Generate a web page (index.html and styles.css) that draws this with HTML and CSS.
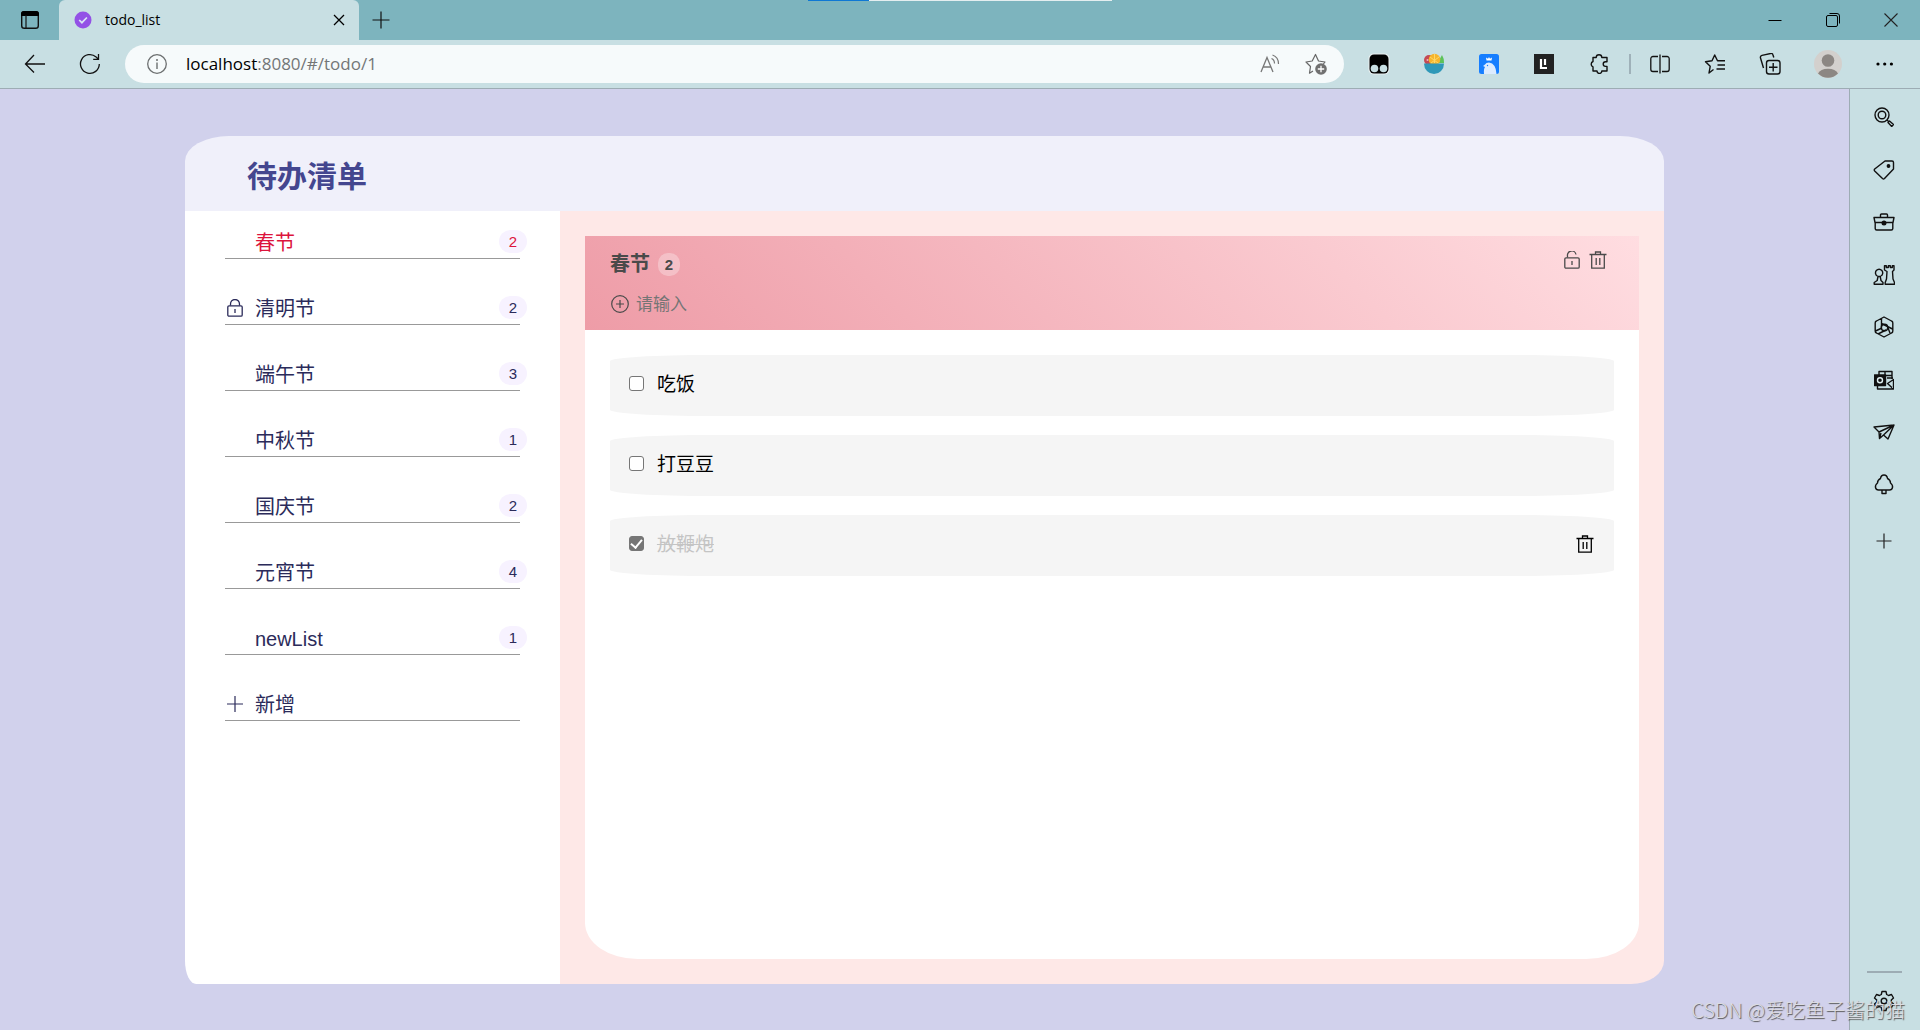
FILE: index.html
```html
<!DOCTYPE html>
<html lang="zh-CN">
<head>
<meta charset="utf-8">
<meta name="viewport" content="width=device-width, initial-scale=1">
<title>todo_list</title>
<link rel="stylesheet" href="styles.css">
</head>
<body>
<header class="browser">
  <div class="load-strip"></div>
  <div class="tabstrip">
    <button class="workspaces" aria-label="Tab actions">
      <svg width="20" height="20" viewBox="0 0 20 20"><rect x="1.7" y="1.7" width="16.6" height="16.6" rx="2.6" fill="none" stroke="#111" stroke-width="1.4"/><path d="M1 6V4a3 3 0 0 1 3-3h12a3 3 0 0 1 3 3v2z" fill="#000"/><path d="M6 5v13" stroke="#111" stroke-width="1.2"/></svg>
    </button>
    <div class="tab">
      <svg width="18" height="18" viewBox="0 0 18 18"><circle cx="9" cy="9" r="8.5" fill="#9351e6"/><path d="M5.2 9l2.7 2.7 5-5.2" fill="none" stroke="#d9e6f5" stroke-width="1.7"/></svg>
      <span class="tab-title">todo_list</span>
      <button class="tab-close" aria-label="Close tab"><svg width="12" height="12" viewBox="0 0 12 12"><path d="M1 1l10 10M11 1L1 11" stroke="#000" stroke-width="1.3"/></svg></button>
    </div>
    <button class="newtab" aria-label="New tab"><svg width="18" height="18" viewBox="0 0 18 18"><path d="M9 .5v17M.5 9h17" stroke="#111" stroke-width="1.2"/></svg></button>
    <div class="window-controls">
      <button aria-label="Minimize"><svg width="14" height="14" viewBox="0 0 14 14"><path d="M.5 7.5h13" stroke="#000"/></svg></button>
      <button aria-label="Restore"><svg width="14" height="14" viewBox="0 0 14 14"><rect x=".5" y="2.5" width="11" height="11" rx="1.5" fill="none" stroke="#000"/><path d="M3.5.5h7.5a2.500 2.500 0 0 1 2.500 2.500v7.500" fill="none" stroke="#000"/></svg></button>
      <button aria-label="Close window"><svg width="14" height="14" viewBox="0 0 14 14"><path d="M.5.5l13 13M13.500.5l-13 13" stroke="#222" stroke-width="1.100"/></svg></button>
    </div>
  </div>
  <div class="toolbar">
    <button class="tool-back" aria-label="Back"><svg width="22" height="20" viewBox="0 0 22 20"><path d="M10 1L1.500 10l8.500 8.500M1.500 10H21" fill="none" stroke="#111" stroke-width="1.300"/></svg></button>
    <button class="tool-reload" aria-label="Reload"><svg width="22" height="22" viewBox="0 0 22 22"><path d="M20.300 11a9.400 9.400 0 1 1-3.200-7.100l2.200 2.300M19.500 1v5.300h-5.300" fill="none" stroke="#111" stroke-width="1.300"/></svg></button>
    <div class="omnibox">
      <svg width="20" height="20" viewBox="0 0 20 20"><circle cx="10" cy="10" r="9.300" fill="none" stroke="#6c6f70" stroke-width="1.300"/><path d="M10 8.500V15" stroke="#6c6f70" stroke-width="1.400"/><circle cx="10" cy="6" r="1" fill="#6c6f70"/></svg>
      <a class="url" href="#/todo/1">localhost<span class="url-rest">:8080/#/todo/1</span></a>
      <button aria-label="Read aloud"><svg width="20" height="20" viewBox="0 0 20 20"><path d="M1 18L7 3.500 13 18M3 13h8" fill="none" stroke="#777" stroke-width="1.300"/><path d="M11.500 4.500q3 1.200 3 5M12.500 1q6 2 6 9" fill="none" stroke="#777" stroke-width="1.200"/></svg></button>
      <button aria-label="Add to favourites"><svg width="22" height="22" viewBox="0 0 22 22"><path d="M8 18l-3.500 2.200 1-6.700L1 9l6.200-1L10.500 1.500 13.500 8l6.500 1-2 2.500" fill="none" stroke="#666" stroke-width="1.200" stroke-linejoin="round"/><circle cx="16" cy="16" r="5.800" fill="#707070"/><path d="M16 12.800v6.400M12.800 16h6.400" stroke="#fff" stroke-width="1.300"/></svg></button>
    </div>
    <div class="extensions">
      <button aria-label="Script manager"><svg width="22" height="22" viewBox="0 0 22 22"><rect x=".5" y=".5" width="21" height="21" rx="5" fill="#e9eff0"/><rect x="1.500" y="1.500" width="19" height="19" rx="4.500" fill="#000"/><circle cx="6.500" cy="15.500" r="3.800" fill="#c8dfe3"/><circle cx="15.500" cy="15.500" r="3.800" fill="#c8dfe3"/></svg></button>
      <button aria-label="Salad"><svg width="22" height="22" viewBox="0 0 22 22"><circle cx="6" cy="7" r="5" fill="#c44a55"/><path d="M15 9l4-7q2 3 2 8h-6z" fill="#5cc35a"/><circle cx="11.500" cy="6.500" r="5.800" fill="#f6b52c"/><path d="M11.500 1v9M7 4l8 6M16 4l-8 6" stroke="#ffd766"/><path d="M1 10.500h20a10 10.500 0 0 1-20 0z" fill="#2f98b8"/><circle cx="4.500" cy="7" r="1" fill="#eeb5bb"/></svg></button>
      <button aria-label="Penguin"><svg width="20" height="20" viewBox="0 0 20 20"><rect width="20" height="20" rx="2.500" fill="#167eff"/><path d="M5 20q-.5-5 1-7l-2-1 2-1.500Q7 8.500 10 8.500q7 1 7.500 11.500z" fill="#dcebff"/><path d="M7.500 6.500L7 3.500l2 1.200L10 3l1 1.700 2-1.200-.5 3z" fill="#fff"/><circle cx="8.500" cy="11.500" r=".7" fill="#167eff"/></svg></button>
      <button aria-label="Library"><svg width="20" height="20" viewBox="0 0 20 20"><rect width="20" height="20" fill="#222"/><path d="M7 5v9h6M11 5v6" fill="none" stroke="#fff" stroke-width="2.200"/></svg></button>
      <button aria-label="Extensions"><svg width="20" height="20" viewBox="0 0 20 20"><path d="M4 3.500h3.200a2.800 2.800 0 0 1 5.600 0H18v4.300h-1.500a2.300 2.300 0 0 0 0 4.600H18v4.600h-5.200a2.400 2.400 0 0 1-4.800 0H4v-4a3 3 0 0 1 0-5.500z" fill="none" stroke="#111" stroke-width="1.400" stroke-linejoin="round"/></svg></button>
    </div>
    <span class="tool-divider"></span>
    <div class="extensions">
      <button aria-label="Split screen"><svg width="20" height="20" viewBox="0 0 20 20"><path d="M8 2.500H3A2.200 2.200 0 0 0 .8 4.700v10.600A2.200 2.200 0 0 0 3 17.500h5M12 2.500h5a2.200 2.200 0 0 1 2.200 2.200v10.600a2.200 2.200 0 0 1-2.200 2.200h-5M10 .5v19" fill="none" stroke="#111" stroke-width="1.300"/></svg></button>
      <button aria-label="Favourites"><svg width="22" height="20" viewBox="0 0 22 20"><path d="M9.500 15.500L5 19l1.200-6.700L1.500 7.700 8 6.800 10.700 1l2.800 5.800h7.500M13.500 11H21M12.500 15H21" fill="none" stroke="#111" stroke-width="1.400" stroke-linejoin="round"/></svg></button>
      <button aria-label="Collections"><svg width="22" height="22" viewBox="0 0 22 22"><path d="M4.500 15L1.500 5a2 2 0 0 1 1.500-2.600l8.500-1.900a2 2 0 0 1 2.500 1.500l.8 2.500" fill="none" stroke="#111" stroke-width="1.400"/><rect x="7.500" y="7.500" width="13.500" height="13.500" rx="2.500" fill="none" stroke="#111" stroke-width="1.400"/><path d="M14.200 10v8.500M10 14.200h8.500" stroke="#111" stroke-width="1.400"/></svg></button>
    </div>
    <button class="tool-profile" aria-label="Profile"><svg width="28" height="28" viewBox="0 0 28 28"><circle cx="14" cy="14" r="14" fill="#d3d0cd"/><circle cx="14" cy="10.500" r="6.300" fill="#8c8783"/><path d="M4 23.500a10.500 7 0 0 1 20 0 14 14 0 0 1-20 0z" fill="#8c8783"/></svg></button>
    <button class="tool-more" aria-label="Settings and more"><svg width="18" height="4" viewBox="0 0 18 4"><circle cx="2" cy="2" r="1.600"/><circle cx="8.700" cy="2" r="1.600"/><circle cx="15.400" cy="2" r="1.600"/></svg></button>
  </div>
</header>

<div class="window-body">
  <div class="stage">
    <section class="panel">
      <header class="panel-head"><h1>待办清单</h1></header>
      <nav class="lists">
        <ul>
          <li><a class="list-link active" href="#/todo/1"><span class="list-icon"></span><span class="list-name">春节</span><span class="count">2</span></a></li>
          <li><a class="list-link" href="#/todo/2"><span class="list-icon"><svg width="16" height="18" viewBox="0 0 16 18"><rect x=".8" y="6.800" width="14.400" height="10.400" rx="1.200" fill="none" stroke="currentColor" stroke-width="1.300"/><path d="M3.500 6.500V5a4.500 4.500 0 0 1 9 0v1.500M8 10v4" fill="none" stroke="currentColor" stroke-width="1.300"/></svg></span><span class="list-name">清明节</span><span class="count">2</span></a></li>
          <li><a class="list-link" href="#/todo/3"><span class="list-icon"></span><span class="list-name">端午节</span><span class="count">3</span></a></li>
          <li><a class="list-link" href="#/todo/4"><span class="list-icon"></span><span class="list-name">中秋节</span><span class="count">1</span></a></li>
          <li><a class="list-link" href="#/todo/5"><span class="list-icon"></span><span class="list-name">国庆节</span><span class="count">2</span></a></li>
          <li><a class="list-link" href="#/todo/6"><span class="list-icon"></span><span class="list-name">元宵节</span><span class="count">4</span></a></li>
          <li><a class="list-link" href="#/todo/7"><span class="list-icon"></span><span class="list-name">newList</span><span class="count">1</span></a></li>
          <li><button class="list-link"><span class="list-icon"><svg width="16" height="16" viewBox="0 0 16 16"><path d="M8 0v16M0 8h16" stroke="currentColor" stroke-width="1.200"/></svg></span><span class="list-name">新增</span></button></li>
        </ul>
      </nav>
      <main class="content">
        <div class="card">
          <div class="card-head">
            <div class="card-title">
              <h2>春节</h2>
              <span class="card-count">2</span>
              <div class="card-actions">
                <button aria-label="锁定"><svg width="16" height="18" viewBox="0 0 16 18"><rect x=".8" y="6.800" width="14.400" height="10.400" rx="1.200" fill="none" stroke="currentColor" stroke-width="1.300"/><path d="M3.500 6.500V5a4.300 4.300 0 0 1 8.500-1.500M8 10v4" fill="none" stroke="currentColor" stroke-width="1.300"/></svg></button>
                <button aria-label="删除清单"><svg width="18" height="18" viewBox="0 0 18 18"><path d="M.5 3.500h17M6.500 3.500v-2.500h5v2.500M2.700 3.500v13.700h12.600V3.500M7.200 7v7M10.800 7v7" fill="none" stroke="currentColor" stroke-width="1.300"/></svg></button>
              </div>
            </div>
            <label class="add-task">
              <svg width="18" height="18" viewBox="0 0 18 18"><circle cx="9" cy="9" r="8.300" fill="none" stroke="currentColor" stroke-width="1.200"/><path d="M9 5v8M5 9h8" stroke="currentColor" stroke-width="1.200"/></svg>
              <input type="text" placeholder="请输入">
            </label>
          </div>
          <ul class="tasks">
            <li class="task"><label><input type="checkbox"><span class="task-name">吃饭</span></label></li>
            <li class="task"><label><input type="checkbox"><span class="task-name">打豆豆</span></label></li>
            <li class="task done"><label><input type="checkbox" checked><span class="task-name">放鞭炮</span></label><button aria-label="删除"><svg width="18" height="18" viewBox="0 0 18 18"><path d="M.5 3.500h17M6.500 3.500v-2.500h5v2.500M2.700 3.500v13.700h12.600V3.500M7.200 7v7M10.800 7v7" fill="none" stroke="currentColor" stroke-width="1.300"/></svg></button></li>
          </ul>
        </div>
      </main>
    </section>
  </div>

  <aside class="edge-bar">
    <div class="edge-apps">
      <button aria-label="Search"><svg width="20" height="20" viewBox="0 0 20 20" class="line"><circle cx="8" cy="8" r="7"/><circle cx="8" cy="8" r="3.800"/><path d="M13 13l1.500 1.500M14 15.500l1.500-1.500 4 3.500-1.800 2z"/></svg></button>
      <button aria-label="Shopping"><svg width="22" height="20" viewBox="0 0 22 20" class="line"><path d="M12 1h7a1.500 1.500 0 0 1 1.500 1.500V9L11.500 18.500a1.500 1.500 0 0 1-2 0L1.700 11a1.500 1.500 0 0 1 0-2z"/><circle cx="15.500" cy="6" r="1.200" fill="#111"/></svg></button>
      <button aria-label="Tools"><svg width="22" height="18" viewBox="0 0 22 18" class="line"><path d="M7.500 4.500V2a1 1 0 0 1 1-1h5a1 1 0 0 1 1 1v2.500M1 4.500h20l-1 5H2zM2.200 9.500v6a1.500 1.500 0 0 0 1.500 1.500h14.600a1.500 1.500 0 0 0 1.500-1.500v-6"/><circle cx="11" cy="10" r="1.800" fill="#111"/></svg></button>
      <button aria-label="Games"><svg width="22" height="20" viewBox="0 0 22 20" class="line"><path d="M1.200 19.200H10v-1.700l-2-2-.8-4H5l-.8 4-3 2zM4.300 11.500H8M4.300 11a3.600 3.600 0 1 1 3.600 0M11.500.8h1.800v1.700h2V.8h2v1.700h2V.8h1.700V5l-1.500 1.500.5 7.500 1.500 3.500v1.700h-9.300v-1.700L13.500 14l.5-7.500L11.500 5z"/></svg></button>
      <button aria-label="Microsoft 365"><svg width="22" height="22" viewBox="0 0 22 22" class="line"><path d="M11 1l7.500 4a2 2 0 0 1 1.300 2v8a2 2 0 0 1-1.300 2L11 21l-7.500-4a2 2 0 0 1-1.300-2V7a2 2 0 0 1 1.300-2zM8.500 2.500v9M2.500 15l6.500-3M5 18l8-4M8.500 7.500L19.500 13M14 9.500L17 17"/><circle cx="11.500" cy="11.500" r="3.200"/></svg></button>
      <button aria-label="Outlook"><svg width="20" height="20" viewBox="0 0 20 20" class="line"><path d="M5 5V1.500h13V9M11 1.500V8M11 5.500h7M3.500 15v4h16V9.500l-6 4 6 5.500M13 8h6"/><rect x=".5" y="5" width="11" height="10.500" fill="#111"/><circle cx="6" cy="10.200" r="2.500" stroke="#dfeef0"/></svg></button>
      <button aria-label="Drop"><svg width="22" height="16" viewBox="0 0 22 16" class="line"><path d="M1 3L21 1l-6 14-4.500-4-4 3.500-.5-6.500zM6 8L21 1 10.500 11M6.500 14.500L8 9"/></svg></button>
      <button aria-label="Tree"><svg width="20" height="21" viewBox="0 0 20 21" class="line"><path d="M10 1q3 0 3.500 3.500 3 1.500 3 4.500 2.500 2 2 4.500-.5 2.500-3 2.500h-11q-2.500 0-3-2.500-.5-2.500 2-4.500 0-3 3-4.500Q7 1 10 1zM8 16.500v3h4v-3"/></svg></button>
    </div>
    <button class="edge-add" aria-label="Customize"><svg width="16" height="16" viewBox="0 0 16 16"><path d="M8 .5v15M.5 8h15" stroke="#222" stroke-width="1.200"/></svg></button>
    <div class="edge-foot">
      <button aria-label="Settings"><svg width="22" height="22" viewBox="0 0 22 22" class="line"><path d="M9 1.500h4l.7 3 1.800 1 3-1 2 3.500-2.200 2v2l2.200 2-2 3.500-3-1-1.800 1-.7 3H9l-.7-3-1.800-1-3 1-2-3.500 2.200-2v-2l-2.200-2 2-3.500 3 1 1.800-1z" stroke-linejoin="round"/><circle cx="11" cy="11" r="2.800"/></svg></button>
    </div>
  </aside>
</div>
<div class="watermark">CSDN @爱吃鱼子酱的猫</div>
</body>
</html>
```

FILE: styles.css
```css
* {
  box-sizing: border-box;
}

body {
  margin: 0;
  min-height: 100vh;
  display: flex;
  flex-direction: column;
  position: relative;
  background: #d1d1ec;
  color: #000;
  font-family: "Liberation Sans", "Noto Sans CJK SC", sans-serif;
}

button {
  display: flex;
  align-items: center;
  justify-content: center;
  margin: 0;
  padding: 0;
  border: 0;
  background: none;
  color: inherit;
  font: inherit;
}

a {
  color: inherit;
  text-decoration: none;
}

ul {
  margin: 0;
  padding: 0;
  list-style: none;
}

h1,
h2 {
  margin: 0;
}

svg {
  display: block;
  flex: none;
}

.line {
  fill: none;
  stroke: #111;
  stroke-width: 1.4;
  stroke-linejoin: round;
}

/* Browser frame */
.browser {
  position: relative;
  background: #c8dfe3;
  border-bottom: 1px solid #9dacb4;
  font-family: "Open Sans", "Noto Sans", sans-serif;
}

.load-strip {
  position: absolute;
  top: 0;
  left: 50%;
  width: 304px;
  height: 1px;
  margin-left: -152px;
  background: linear-gradient(90deg, #0f78d4 61px, #e4eef0 61px);
}

.tabstrip {
  display: flex;
  height: 40px;
  background: #7db4be;
}

.workspaces {
  width: 59px;
  border-bottom-right-radius: 6px;
}

.tab {
  display: flex;
  align-items: center;
  width: 300px;
  padding: 0 14px 0 15px;
  border-radius: 6px 6px 0 0;
  background: #c8dfe3;
}

.tab-title {
  flex: 1;
  margin-left: 13px;
  font-size: 14px;
  line-height: 20px;
}

.newtab {
  width: 44px;
}

.window-controls {
  display: flex;
  margin-left: auto;
}

.window-controls button {
  width: 58px;
}

.toolbar {
  display: flex;
  align-items: center;
  height: 48px;
  padding-right: 9px;
}

.toolbar > button,
.extensions button {
  height: 40px;
}

.tool-back {
  width: 70px;
}

.tool-reload {
  width: 40px;
}

.omnibox {
  flex: 1;
  display: flex;
  align-items: center;
  height: 38px;
  margin-left: 15px;
  padding: 0 16px 0 22px;
  border-radius: 19px;
  background: #f6fafb;
}

.url {
  flex: 1;
  margin-left: 19px;
  font-size: 17px;
  line-height: 24px;
}

.url-rest {
  color: #737677;
}

.omnibox button {
  width: 24px;
  margin-left: 22px;
}

.extensions {
  display: flex;
}

.omnibox + .extensions {
  margin-left: 7px;
}

.extensions button {
  width: 55px;
}

.tool-divider {
  width: 2px;
  height: 20px;
  margin: 0 1px 0 3px;
  background: #9fb1b9;
}

.tool-profile {
  width: 62px;
}

.tool-more {
  width: 52px;
}

.window-body {
  flex: 1;
  display: flex;
}

/* To-do panel */
.stage {
  flex: 1;
  display: flex;
  justify-content: center;
  padding: 47px 0 46px;
}

.panel {
  width: 80%;
  display: grid;
  grid-template: 75px 1fr / 375px 1fr;
}

.panel-head {
  grid-column: 1 / -1;
  display: flex;
  align-items: center;
  padding: 6px 62px 0;
  border-radius: 44px 44px 0 0 / 25px 25px 0 0;
  background: #f0f0fa;
}

.panel-head h1 {
  color: #44468f;
  font-size: 30px;
  line-height: 40px;
}

.lists {
  padding: 14px 40px;
  border-bottom-left-radius: 3%;
  background: #fff;
}

.lists li {
  margin-bottom: 32px;
}

.list-link {
  display: flex;
  justify-content: flex-start;
  align-items: center;
  width: 100%;
  height: 34px;
  border-bottom: 1px solid #999;
  color: #2b2b5a;
  font-size: 20px;
  line-height: 28px;
}

.list-link.active {
  color: #dc143c;
}

.list-icon {
  width: 28px;
  margin-left: 2px;
}

.list-name {
  padding-top: 2px;
}

.count {
  width: 28px;
  height: 23px;
  margin: 0 -7px 0 auto;
  border-radius: 12px;
  background: #f7f2ff;
  font-size: 15px;
  line-height: 23px;
  text-align: center;
}

.content {
  display: flex;
  padding: 25px;
  border-bottom-right-radius: 3%;
  background: #fee8e7;
}

.card {
  flex: 1;
  overflow: hidden;
  border-radius: 0 0 5% 5%;
  background: #fff;
}

.card-head {
  height: 94px;
  padding: 14px 32px 0 25px;
  background: linear-gradient(45deg, #ee9ca7, #ffdde1);
  color: #4a4a4a;
}

.card-title {
  display: flex;
  align-items: center;
  height: 28px;
}

.card-title h2 {
  font-size: 20px;
  line-height: 28px;
}

.card-count {
  width: 22px;
  height: 23px;
  margin-left: 8px;
  border-radius: 10px;
  background: rgba(255, 255, 255, 0.3);
  font-size: 15px;
  font-weight: bold;
  line-height: 23px;
  text-align: center;
}

.card-actions {
  display: flex;
  align-items: center;
  gap: 9px;
  height: 18px;
  margin: 0 0 8px auto;
}

.add-task {
  display: flex;
  align-items: center;
  gap: 7px;
  margin-top: 12px;
  padding-left: 1px;
}

.add-task input {
  flex: 1;
  padding: 2px 0 0;
  border: 0;
  outline: 0;
  background: none;
  color: inherit;
  font: 17px/26px "Liberation Sans", "Noto Sans CJK SC", sans-serif;
}

.add-task input::placeholder {
  color: #757575;
}

.tasks {
  display: grid;
  gap: 19px;
  padding: 25px;
}

.task {
  display: flex;
  align-items: center;
  justify-content: space-between;
  height: 61px;
  padding: 0 20px 4px 19px;
  border-radius: 10%;
  background: #f5f5f5;
}

.task label {
  display: flex;
  align-items: center;
  gap: 13px;
  font-size: 19px;
  line-height: 28px;
}

.task-name {
  padding-top: 3px;
}

.task input {
  appearance: none;
  width: 15px;
  height: 15px;
  margin: 0;
  border: 1px solid #767676;
  border-radius: 3px;
  background: #fff;
}

.task input:checked {
  background: #767676;
}

.task input:checked::before {
  content: "";
  display: block;
  width: 5px;
  height: 9px;
  margin: 0 auto;
  border: solid #fff;
  border-width: 0 2px 2px 0;
  transform: rotate(40deg);
}

.done .task-name {
  color: #c4c4c4;
  text-decoration: line-through;
}

/* Browser side bar */
.edge-bar {
  display: flex;
  flex-direction: column;
  width: 71px;
  padding: 2px 2px 0 0;
  border-left: 1px solid #9dacb4;
  background: #c8dfe3;
}

.edge-apps {
  display: grid;
  grid-auto-rows: 1fr;
  height: 420px;
}

.edge-apps button {
  width: 100%;
}

.edge-add {
  height: 60px;
}

.edge-foot {
  width: 35px;
  margin: auto auto 18px;
  padding-top: 17px;
  border-top: 2px solid #9dacb4;
}

.edge-foot button {
  width: 100%;
}

.watermark {
  position: absolute;
  right: 15px;
  bottom: 5px;
  color: #dcdce2;
  font: 300 20px/30px "Noto Sans CJK SC", sans-serif;
  text-shadow: 1px 1px 1px #555;
}
```
